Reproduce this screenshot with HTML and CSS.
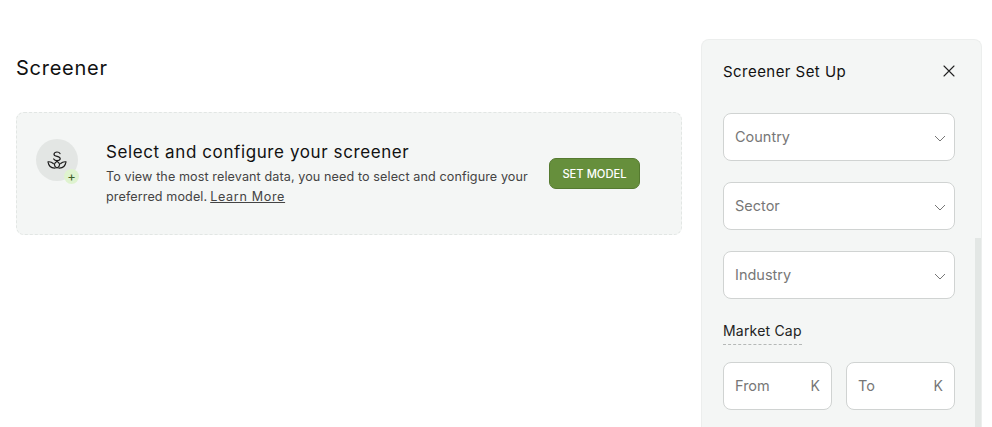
FILE: index.html
```html
<!DOCTYPE html>
<html lang="en">
<head>
    <meta charset="UTF-8">
    <meta name="viewport" content="width=device-width, initial-scale=1.0">
    <title>Screener</title>
    <link rel="stylesheet" href="styles.css">
</head>
<body>
    <div class="page">
        <main class="main">
            <h1 class="page-title">Screener</h1>
            <section class="empty-card">
                <div class="model-icon">
                    <svg width="20" height="18" viewBox="0 0 20 18" fill="none" stroke="#1c1c1c" stroke-width="1.2" stroke-linecap="round" stroke-linejoin="round">
                        <path d="M13 2.600C12.500 1.500 11.300 1 10 1 8.300 1 7 1.900 7 3.200c0 2.800 6.200 1.700 6.200 4.400 0 1.300-1.400 2.100-3.200 2.100-1.400 0-2.700-.6-3.300-1.700"/>
                        <path d="M10 17c-1.800-1-2.600-2.300-2.600-3.600 0-1 .9-2 2.600-3.200 1.700 1.200 2.600 2.200 2.600 3.200 0 1.300-.8 2.600-2.600 3.600z"/>
                        <path d="M8.300 17C4.300 17.300 1.700 15 1 10.800c2-.2 4 .4 5.300 1.700"/>
                        <path d="M11.700 17c4 .3 6.600-2 7.300-6.200-2-.2-4 .4-5.300 1.700"/>
                    </svg>
                    <span class="plus-badge">+</span>
                </div>
                <div class="empty-text">
                    <h2>Select and configure your screener</h2>
                    <p>To view the most relevant data, you need to select and configure your</p>
                    <p class="with-link"><span>preferred model.</span><a href="#">Learn More</a></p>
                </div>
                <button class="button">SET MODEL</button>
            </section>
        </main>

        <aside class="panel">
            <div class="panel-head">
                <h3>Screener Set Up</h3>
                <svg class="close" width="12" height="12" viewBox="0 0 12 12" fill="none" stroke="#222" stroke-width="1.1" stroke-linecap="round">
                    <path d="M1 1l10 10M11 1L1 11"/>
                </svg>
            </div>
            <div class="field"><span>Country</span><svg class="chevron" width="12" height="7" viewBox="0 0 12 7" fill="none" stroke="#777" stroke-width="1"><path d="M1 1l5 5 5-5"/></svg></div>
            <div class="field"><span>Sector</span><svg class="chevron" width="12" height="7" viewBox="0 0 12 7" fill="none" stroke="#777" stroke-width="1"><path d="M1 1l5 5 5-5"/></svg></div>
            <div class="field"><span>Industry</span><svg class="chevron" width="12" height="7" viewBox="0 0 12 7" fill="none" stroke="#777" stroke-width="1"><path d="M1 1l5 5 5-5"/></svg></div>
            <div class="range-label"><span>Market Cap</span></div>
            <div class="range">
                <div class="field"><span>From</span><span class="unit">K</span></div>
                <div class="field"><span>To</span><span class="unit">K</span></div>
            </div>
            <div class="scrollbar"></div>
        </aside>
    </div>
</body>
</html>
```

FILE: styles.css
```css
html, body {
    margin: 0;
    height: 100%;
    overflow: hidden;
}
body {
    font-family: Inter, "Open Sans", sans-serif;
    background-color: #fff;
    color: #111;
}
.page {
    display: flex;
    height: 427px;
    padding: 39px 10px 0 16px;
    box-sizing: border-box;
    gap: 19px;
}
.main {
    width: 666px;
    flex: none;
}
.page-title {
    margin: 17px 0 31px;
    font-size: 20px;
    line-height: 25px;
    font-weight: 400;
    letter-spacing: 0.75px;
}
.empty-card {
    display: flex;
    align-items: center;
    height: 123px;
    box-sizing: border-box;
    padding: 0 41px 0 19px;
    background-color: #f4f6f5;
    border: 1px dashed #e2e6e4;
    border-radius: 8px;
}
.model-icon {
    position: relative;
    display: flex;
    align-items: center;
    justify-content: center;
    flex: none;
    align-self: flex-start;
    width: 42px;
    height: 42px;
    margin: 26px 28px 0 0;
    border-radius: 50%;
    background-color: #e3e6e4;
}
.plus-badge {
    position: absolute;
    right: -1px;
    bottom: -3px;
    width: 15px;
    height: 15px;
    border-radius: 50%;
    background-color: #dff3cf;
    color: #3f5f2a;
    font-size: 13px;
    line-height: 15px;
    text-align: center;
}
.empty-text {
    width: 443px;
    flex: none;
}
.empty-text h2 {
    margin: 0 0 3px;
    font-size: 17px;
    line-height: 24px;
    font-weight: 400;
    letter-spacing: 0.6px;
}
.empty-text p {
    margin: 0;
    font-size: 12.6px;
    line-height: 20px;
    color: #444;
    letter-spacing: 0.1px;
}
.with-link {
    display: flex;
    gap: 3px;
}
.empty-text a {
    color: #444;
    letter-spacing: 0.65px;
}
.button {
    flex: none;
    width: 91px;
    height: 31px;
    padding: 0;
    border: 1px solid #557a30;
    border-radius: 7px;
    background-color: #668f3c;
    color: #fff;
    font-family: inherit;
    font-size: 11.2px;
    font-weight: 500;
}
.panel {
    position: relative;
    flex: none;
    width: 281px;
    box-sizing: border-box;
    padding: 0 26px 0 21px;
    background-color: #f4f6f5;
    border: 1px solid #eceeed;
    border-bottom: none;
    border-radius: 8px 8px 0 0;
    overflow: hidden;
}
.panel-head {
    display: flex;
    align-items: center;
    justify-content: space-between;
    height: 24px;
    margin: 19px 0 30px;
}
.panel-head h3 {
    margin: 0;
    font-size: 15px;
    font-weight: 400;
    letter-spacing: 0.45px;
}
.field {
    display: flex;
    align-items: center;
    justify-content: space-between;
    height: 48px;
    box-sizing: border-box;
    margin-bottom: 21px;
    padding: 0 8px 2px 11px;
    background-color: #fff;
    border: 1px solid #d0d3d2;
    border-radius: 8px;
    font-size: 14.5px;
    color: #777;
}
.chevron {
    margin-top: 4px;
}
.range-label {
    margin-bottom: 17px;
}
.range-label span {
    display: inline-block;
    padding-bottom: 3px;
    border-bottom: 1px dashed #b5b8b7;
    font-size: 14px;
    line-height: 20px;
    letter-spacing: 0.2px;
    color: #222;
}
.range {
    display: flex;
    gap: 14px;
}
.range .field {
    flex: 1;
    padding-right: 11px;
}
.unit {
    font-size: 14px;
}
.scrollbar {
    position: absolute;
    top: 198px;
    right: 0;
    bottom: 0;
    width: 6px;
    background-color: #e3e7e5;
}
```
